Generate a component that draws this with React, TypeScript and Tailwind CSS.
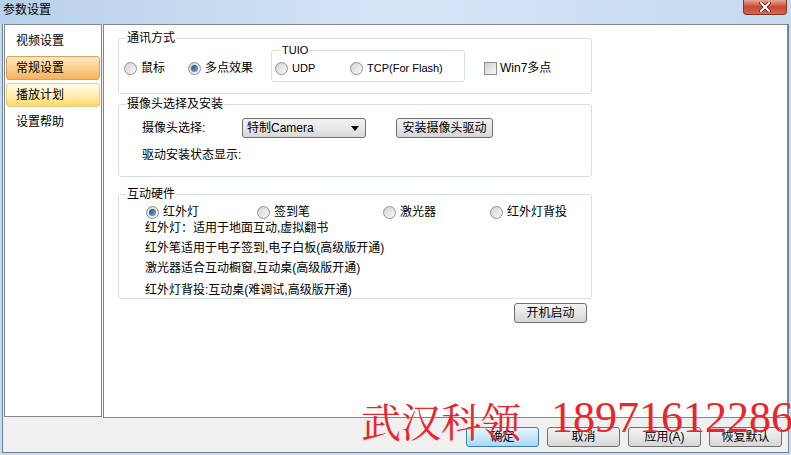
import React from 'react';

const font = "font-['Liberation_Sans','Noto_Sans_CJK_SC',sans-serif]";

function Radio({ checked = false }: { checked?: boolean }) {
  return (
    <span className="flex h-[13px] w-[13px] shrink-0 items-center justify-center rounded-full border border-[#8f8f8f] bg-linear-to-br from-[#d2d2d2] to-[#fbfbfb]">
      {checked && <span className="h-[7px] w-[7px] rounded-full bg-linear-to-br from-[#1c4a7e] to-[#7fb0e0]" />}
    </span>
  );
}

function Opt({ label, checked, className = '', small }: { label: string; checked?: boolean; className?: string; small?: boolean }) {
  return (
    <div className={`flex shrink-0 items-center gap-[4px] ${className}`}>
      <Radio checked={checked} />
      <span className={small ? 'text-[11px]' : ''}>{label}</span>
    </div>
  );
}

function Btn({ label, focus, className = '' }: { label: string; focus?: boolean; className?: string }) {
  return (
    <div
      className={`flex h-[20px] items-center justify-center rounded-[3px] border leading-none ${
        focus
          ? 'border-[#3c7fb1] bg-linear-to-b from-[#eaf6fd] via-[#c7e7fa] to-[#a7d9f5]'
          : 'border-[#707070] bg-linear-to-b from-[#f3f3f3] via-[#e6e6e6] to-[#d6d6d6]'
      } ${className}`}
    >
      {label}
    </div>
  );
}

function Group({ title, className = '', children }: { title: string; className?: string; children: React.ReactNode }) {
  return (
    <div className={`relative w-[474px] rounded-[3px] border border-[#d5dfe5] ${className}`}>
      <span className="absolute -top-[8px] left-[7px] bg-white px-[1px] leading-[14px]">{title}</span>
      {children}
    </div>
  );
}

export default function App() {
  return (
    <div className={`relative flex h-[455px] w-[791px] flex-col overflow-hidden bg-[#c7daef] text-[12px] text-black ${font}`}>
      {/* title bar */}
      <div className="flex h-[24px] shrink-0 justify-between bg-linear-to-r from-[#b8d0ea] via-[#d6e5f6] to-[#c6daf0]">
        <span className="pl-[3px] pt-[3px] leading-[14px]">参数设置</span>
        <div className="mr-[4px] flex h-[15px] w-[44px] items-center justify-center rounded-b-[4px] border border-t-0 border-[#7e3426] bg-linear-to-b from-[#e6a493] via-[#c9472f] to-[#d8664d]">
          <svg width="12" height="10" viewBox="0 0 12 10">
            <path d="M2 1 L10 9 M10 1 L2 9" stroke="#5a1e14" strokeWidth="3.6" strokeLinecap="square" />
            <path d="M2 1 L10 9 M10 1 L2 9" stroke="#ffffff" strokeWidth="2" strokeLinecap="square" />
          </svg>
        </div>
      </div>

      {/* body */}
      <div className="mx-[2px] mb-[2px] flex flex-1 flex-col border-x border-b border-[#6f8196] bg-[#f0f0f0]">
        <div className="flex h-[394px] shrink-0 gap-[1px] pl-[1px]">
          {/* left nav */}
          <div className="flex h-[393px] w-[98px] flex-col gap-[3px] border border-[#828790] bg-white px-[1px] pt-[4px]">
            <div className="flex h-[24px] items-center pl-[10px]">视频设置</div>
            <div className="flex h-[24px] items-center rounded-[3px] border border-[#d9a15c] bg-linear-to-b from-[#fde7c3] via-[#fbcf8c] to-[#f6b25d] pl-[9px]">
              常规设置
            </div>
            <div className="flex h-[24px] items-center rounded-[3px] border border-[#e5cd7c] bg-linear-to-b from-[#fffbe6] via-[#fff0b4] to-[#fbd764] pl-[9px]">
              播放计划
            </div>
            <div className="flex h-[24px] items-center pl-[10px]">设置帮助</div>
          </div>

          {/* content */}
          <div className="flex flex-1 flex-col border border-[#828790] bg-white px-[14px]">
            <Group title="通讯方式" className="mt-[13px] h-[56px]">
              <div className="mt-[11px] flex h-[32px] pl-[5px]">
                <div className="flex w-[64px] items-center pt-[4px]">
                  <Opt label="鼠标" />
                </div>
                <div className="flex w-[83px] items-center pt-[4px]">
                  <Opt label="多点效果" checked />
                </div>
                <div className="relative flex w-[194px] items-center rounded-[3px] border border-[#d5dfe5] pl-[3px] pt-[4px]">
                  <span className="absolute -top-[8px] left-[9px] bg-white px-[1px] text-[11px] leading-[14px]">TUIO</span>
                  <Opt label="UDP" small className="w-[75px]" />
                  <Opt label="TCP(For Flash)" small />
                </div>
                <div className="ml-[19px] flex items-center gap-[3px] pt-[4px]">
                  <span className="h-[13px] w-[13px] border border-[#8f8f8f] bg-linear-to-br from-[#d0d0d0] to-[#f7f7f7]" />
                  <span>Win7多点</span>
                </div>
              </div>
            </Group>

            <Group title="摄像头选择及安装" className="mt-[10px] h-[73px]">
              <div className="mt-[13px] flex h-[20px] items-center pl-[23px]">
                <span className="w-[100px]">摄像头选择:</span>
                <div className="flex h-[20px] w-[124px] items-center justify-between rounded-[3px] border border-[#707070] bg-linear-to-b from-[#f3f3f3] via-[#e8e8e8] to-[#d8d8d8] pl-[4px] pr-[6px]">
                  <span>特制Camera</span>
                  <svg width="8" height="5" viewBox="0 0 8 5">
                    <path d="M0 0 H8 L4 5 Z" fill="#000" />
                  </svg>
                </div>
                <Btn label="安装摄像头驱动" className="ml-[30px] w-[97px]" />
              </div>
              <div className="mt-[9px] pl-[23px] leading-[16px]">驱动安装状态显示:</div>
            </Group>

            <Group title="互动硬件" className="mt-[17px] h-[105px]">
              <div className="mt-[9px] flex h-[16px] items-center pl-[27px]">
                <Opt label="红外灯" checked className="w-[111px]" />
                <Opt label="签到笔" className="w-[126px]" />
                <Opt label="激光器" className="w-[107px]" />
                <Opt label="红外灯背投" />
              </div>
              <div className="pl-[26px] leading-[16px]">
                <div>红外灯：适用于地面互动,虚拟翻书</div>
                <div className="mt-[4px]">红外笔适用于电子签到,电子白板(高级版开通)</div>
                <div className="mt-[4px]">激光器适合互动橱窗,互动桌(高级版开通)</div>
                <div className="mt-[6px]">红外灯背投:互动桌(难调试,高级版开通)</div>
              </div>
            </Group>

            <div className="flex w-[474px] justify-end pr-[5px] pt-[4px]">
              <Btn label="开机启动" className="w-[73px]" />
            </div>
          </div>
        </div>

        {/* bottom buttons */}
        <div className="flex flex-1 justify-end gap-[8px] pr-[6px] pt-[9px]">
          <Btn label="确定" focus className="w-[73px]" />
          <Btn label="取消" className="w-[73px]" />
          <Btn label="应用(A)" className="w-[73px]" />
          <Btn label="恢复默认" className="w-[73px]" />
        </div>
      </div>

      {/* watermark */}
      <div className="pointer-events-none absolute left-[361px] top-[396px] flex items-end whitespace-nowrap leading-none text-[#e8262b]">
        <span className="font-['Noto_Serif_CJK_SC','Noto_Sans_CJK_SC',serif] text-[40px]">武汉科领</span>
        <span className="ml-[30px] font-['Liberation_Serif',serif] text-[44px]">18971612286</span>
      </div>
    </div>
  );
}
